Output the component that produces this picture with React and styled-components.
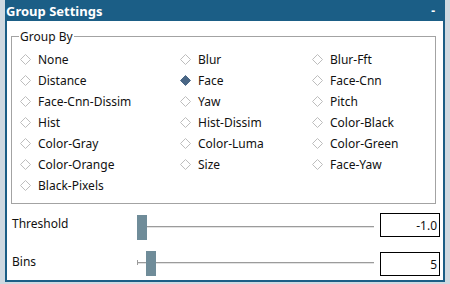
import React from 'react'
import styled, { createGlobalStyle } from 'styled-components'

const GlobalStyle = createGlobalStyle`
  html, body {
    margin: 0;
    padding: 0;
    background: #cfd9e1;
    font-family: "Noto Sans", "Open Sans", sans-serif;
    font-size: 12px;
    color: #111;
  }
`

const Frame = styled.div`
  width: 450px;
  height: 284px;
  box-sizing: border-box;
  padding: 0 5px 2px 5px;
`

const Window = styled.div`
  height: 100%;
  box-sizing: border-box;
  background: #fff;
  border: 2px solid #1b5e86;
  border-top: none;
  display: flex;
  flex-direction: column;
`

const TitleBar = styled.div`
  height: 21px;
  background: #1b5e86;
  color: #fff;
  font-weight: bold;
  font-size: 13px;
  display: flex;
  align-items: center;
  justify-content: space-between;
  padding: 0 10px 0 1px;
  margin: 0 -2px;
`

const Collapse = styled.span`
  font-size: 12px;
  line-height: 1;
`

const Body = styled.div`
  padding: 7px 3px 0 4px;
  display: flex;
  flex-direction: column;
`

const GroupBox = styled.fieldset`
  margin: 0;
  padding: 0 0 4px 8px;
  border: 1px solid #a3a3a3;
  height: 176px;
  box-sizing: border-box;
  margin-right: 4px;
`

const Legend = styled.legend`
  padding: 0 1px;
  margin-left: -1px;
  font-size: 12px;
`

const OptionGrid = styled.div`
  display: grid;
  grid-template-columns: 160px 132px 1fr;
  grid-auto-rows: 21px;
  margin-top: 4px;
`

const Option = styled.div`
  display: flex;
  align-items: center;
  gap: 7px;
  white-space: nowrap;
`

const Diamond = ({ checked }) => (
  <svg width="11" height="11" viewBox="0 0 11 11">
    <path
      d="M5.5 0.5 L10.5 5.5 L5.5 10.5 L0.5 5.5 Z"
      fill={checked ? '#4a6786' : '#fff'}
      stroke={checked ? '#4a6786' : '#bdbdbd'}
      strokeWidth="1"
    />
  </svg>
)

const SliderRow = styled.div`
  display: flex;
  align-items: flex-start;
  height: 25px;
  margin-top: ${({ $top }) => $top}px;
`

const Label = styled.span`
  width: 126px;
  padding-left: 1px;
  line-height: 17px;
  margin-top: ${({ $off }) => $off}px;
`

const Track = styled.div`
  position: relative;
  width: 239px;
  height: 25px;
  margin-right: 6px;
`

const Groove = styled.div`
  position: absolute;
  left: 0;
  right: 0;
  top: 11px;
  height: 1px;
  background: #9b9b9b;
  border-bottom: 1px solid #e2e2e2;
  &::before {
    content: '';
    display: ${({ $tick }) => ($tick ? 'block' : 'none')};
    position: absolute;
    left: 0;
    top: -2px;
    width: 1px;
    height: 5px;
    background: #9b9b9b;
  }
`

const Handle = styled.div`
  position: absolute;
  top: 0;
  width: 10px;
  height: 25px;
  background: #6f8c99;
`

const ValueBox = styled.div`
  width: 57px;
  height: 22px;
  border: 1px solid #000;
  display: flex;
  align-items: center;
  justify-content: flex-end;
  padding-right: 2px;
  font-size: 12px;
  margin-top: ${({ $off }) => $off}px;
`

const options = [
  ['None', 'Blur', 'Blur-Fft'],
  ['Distance', 'Face', 'Face-Cnn'],
  ['Face-Cnn-Dissim', 'Yaw', 'Pitch'],
  ['Hist', 'Hist-Dissim', 'Color-Black'],
  ['Color-Gray', 'Color-Luma', 'Color-Green'],
  ['Color-Orange', 'Size', 'Face-Yaw'],
  ['Black-Pixels'],
]

const Slider = ({ label, value, pos, tick, top, labelOff, boxOff }) => (
  <SliderRow $top={top}>
    <Label $off={labelOff}>{label}</Label>
    <Track>
      <Groove $tick={tick} />
      <Handle style={{ left: pos }} />
    </Track>
    <ValueBox $off={boxOff}>{value}</ValueBox>
  </SliderRow>
)

export default function App() {
  return (
    <Frame>
      <GlobalStyle />
      <Window>
        <TitleBar>
          <span>Group Settings</span>
          <Collapse>-</Collapse>
        </TitleBar>
        <Body>
          <GroupBox>
            <Legend>Group By</Legend>
            <OptionGrid>
              {options.flat().map((name) => (
                <Option key={name}>
                  <Diamond checked={name === 'Face'} />
                  <span>{name}</span>
                </Option>
              ))}
            </OptionGrid>
          </GroupBox>
          <Slider label="Threshold" value="-1.0" pos={0} top={11} labelOff={0} boxOff={-2} />
          <Slider label="Bins" value="5" pos={9} tick top={11} labelOff={2} boxOff={1} />
        </Body>
      </Window>
    </Frame>
  )
}
